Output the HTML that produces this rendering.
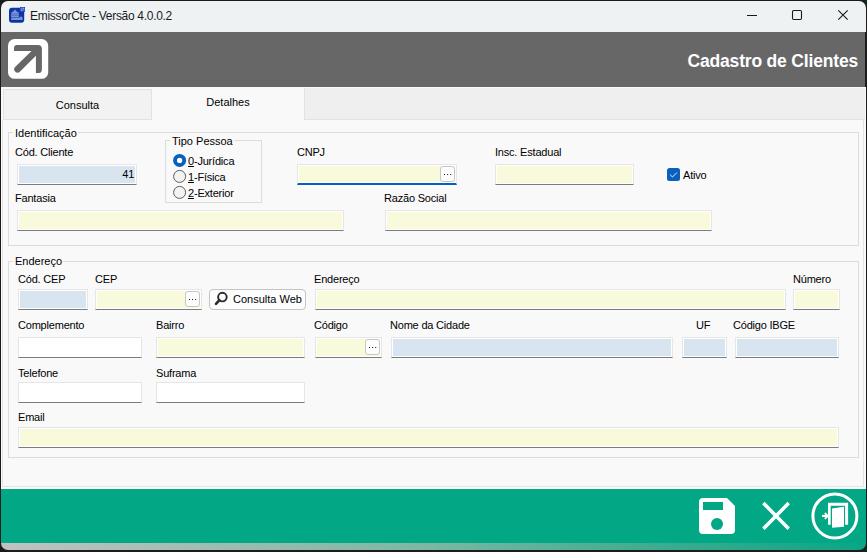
<!DOCTYPE html>
<html><head><meta charset="utf-8">
<style>
*{box-sizing:border-box;margin:0;padding:0}
html,body{width:867px;height:552px;overflow:hidden;background:linear-gradient(to right,#1a1a1a 0%,#1a1a1a 60%,#0d2a20 100%);font-family:"Liberation Sans",sans-serif;}
.win{position:absolute;left:0;top:0;width:867px;height:552px;background:#1c1c1c;border-radius:8px 8px 8px 8px;overflow:hidden}
.a{position:absolute}
.titlebar{left:1px;top:1px;width:865px;height:31px;background:#eff2f3;border-radius:7px 7px 0 0}
.ttl{left:30px;top:9.4px;font-size:12px;letter-spacing:-0.3px;color:#1a1a1a;white-space:nowrap}
.hdr{left:1px;top:32px;width:864px;height:55px;background:#676767}
.hdrtxt{right:9px;top:51px;font-size:17.5px;letter-spacing:-0.18px;font-weight:bold;color:#fff;white-space:nowrap}
.body{left:1px;top:87px;width:865px;height:402px;background:#f9f9f9}
.tabstrip{left:304px;top:88px;width:561px;height:32px;background:#efefef;border-left:1px solid #e2e2e2;border-bottom:1px solid #e2e2e2}
.tab{top:88px;height:32px;font-size:11px;color:#000;text-align:center;line-height:32px}
.page{left:2px;top:120px;width:862px;height:367px;border:1px solid #e4e4e4;border-top:none}
.grp{border:1px solid #dcdcdc}
.gl{font-size:11px;color:#000;background:#f9f9f9;padding:0 1px 0 2px;white-space:nowrap;letter-spacing:0px}
.lbl{font-size:11px;color:#000;white-space:nowrap;letter-spacing:-0.2px}
.in{height:21px;border:1px solid #e6e6e6;border-bottom:1px solid #7c7c7c;box-shadow:inset 1px 1px 0 #fff,inset -1px -1px 0 #fff}
.y{background:#f9fadc}
.b{background:#d8e5f1}
.w{background:#fff}
.footer{left:1px;top:489px;width:865px;height:54px;background:#02a886}
.fline{left:1px;top:488px;width:865px;height:1px;background:#fbfbfb}
.bot{left:1px;top:543px;width:865px;height:7px;background:linear-gradient(to right,#c0c2c1 0%,#9dbdb2 25%,#7ab7a4 50%,#3fac90 75%,#0aa686 100%);border-radius:0 0 7px 7px}
.ell{width:15px;height:16px;border:1px solid #c6c6c6;border-radius:3px;background:#fdfdfd}
.ell::after{content:"";position:absolute;left:2.8px;top:6.8px;width:1.6px;height:1.6px;background:#111;box-shadow:3.1px 0 0 #111,6.2px 0 0 #111}
</style></head><body>
<div class="win">
  <div class="a titlebar"></div>
  <svg class="a" style="left:6px;top:4px" width="22" height="22" viewBox="0 0 22 22">
    <rect x="3" y="3.8" width="15.2" height="15" rx="3" fill="#0a36a8"/>
    <rect x="14" y="3" width="5" height="4.8" fill="#0a36a8"/>
    <rect x="14.6" y="3.6" width="3.8" height="3.6" fill="#8ea0dc"/>
    <rect x="15.4" y="4.4" width="1.2" height="1.2" fill="#0a36a8"/><rect x="16.6" y="5.6" width="1.2" height="1.2" fill="#0a36a8"/>
    <path d="M5.2 13.4 V8.8 L7.2 7.4 L9 5.6 L10.8 7.4 L12.8 8.8 V13.4 Z" fill="#8092d4"/>
    <path d="M5.4 9.8 H12.6 M5.4 11.4 H12.6" stroke="#3d5bbd" stroke-width="0.6"/>
    <path d="M5.2 15 H16.5" stroke="#9fb0e4" stroke-width="1.3"/>
    <path d="M13.5 13.6 Q15 12.4 16.4 13.6" stroke="#9fb0e4" stroke-width="1" fill="none"/>
  </svg>
  <div class="a ttl">EmissorCte - Versão 4.0.0.2</div>
  <svg class="a" style="left:746px;top:9px" width="110" height="14" viewBox="0 0 110 14">
    <path d="M1 6.5 H11" stroke="#1a1a1a" stroke-width="1"/>
    <rect x="46.5" y="1.5" width="9" height="9" fill="none" stroke="#1a1a1a" stroke-width="1.1" rx="1.2"/>
    <path d="M92.3 1.3 L101.7 10.7 M101.7 1.3 L92.3 10.7" stroke="#1a1a1a" stroke-width="1.15"/>
  </svg>
  <div class="a hdr"></div>
  <svg class="a" style="left:6px;top:37px" width="44" height="44" viewBox="0 0 44 44">
    <rect x="2" y="2" width="40.2" height="39.8" rx="6.5" fill="#fff"/>
    <path d="M8 14 V11 Q8 8 11 8 H32 Q35.9 8 35.9 12 V32 Q35.9 35.9 32.9 35.9 H29.9 V18.7 L13.6 35 A3.4 3.4 0 0 1 8.6 30.6 L25.5 14 Z" fill="#676767"/>
  </svg>
  <div class="a hdrtxt">Cadastro de Clientes</div>
  <div class="a body"></div>
  <div class="a tabstrip"></div>
  <div class="a tab" style="left:3px;top:89px;width:149px;height:31px;background:#f2f2f2;border:1px solid #e2e2e2;line-height:29px;padding-top:1px">Consulta</div>
  <div class="a tab" style="left:152px;width:152px;top:87px;height:34px;line-height:31px">Detalhes</div>
  <div class="a page"></div>

  <!-- Identificacao -->
  <div class="a grp" style="left:8px;top:132px;width:851px;height:114px"></div>
  <div class="a gl" style="left:13px;top:127px">Identificação</div>
  <div class="a lbl" style="left:15px;top:146px">Cód. Cliente</div>
  <div class="a in b" style="left:17px;top:164px;width:120px;font-size:11px;text-align:right;padding-right:1.5px;line-height:19px">41</div>
  <div class="a grp" style="left:165px;top:140px;width:97px;height:63px"></div>
  <div class="a gl" style="left:170px;top:135px">Tipo Pessoa</div>
  <svg class="a" style="left:172px;top:153px" width="16" height="46" viewBox="0 0 16 46">
    <circle cx="7.6" cy="7.4" r="6.5" fill="#0a5fbf"/><circle cx="7.6" cy="7.4" r="2.6" fill="#fff"/>
    <circle cx="7.6" cy="23.4" r="6" fill="#f3f3f3" stroke="#5c5c5c" stroke-width="1"/>
    <circle cx="7.6" cy="39.4" r="6" fill="#f3f3f3" stroke="#5c5c5c" stroke-width="1"/>
  </svg>
  <div class="a lbl" style="left:188px;top:155px"><u>0</u>-Jurídica</div>
  <div class="a lbl" style="left:188px;top:171px"><u>1</u>-Física</div>
  <div class="a lbl" style="left:188px;top:187px"><u>2</u>-Exterior</div>
  <div class="a lbl" style="left:297px;top:146px">CNPJ</div>
  <div class="a in y" style="left:297px;top:164px;width:160px;border-bottom:2px solid #0061c0"></div>
  <div class="a ell" style="left:440px;top:166px"></div>
  <div class="a lbl" style="left:495px;top:146px">Insc. Estadual</div>
  <div class="a in y" style="left:495px;top:164px;width:139px"></div>
  <svg class="a" style="left:667px;top:168px" width="13" height="13" viewBox="0 0 13 13">
    <rect x="0" y="0" width="13" height="13" rx="2.5" fill="#0a5fbf"/>
    <path d="M3.2 6.8 L5.5 9 L9.8 4.6" fill="none" stroke="#e8f0fa" stroke-width="1"/>
  </svg>
  <div class="a lbl" style="left:683px;top:169px">Ativo</div>
  <div class="a lbl" style="left:15px;top:192px">Fantasia</div>
  <div class="a in y" style="left:17px;top:210px;width:327px"></div>
  <div class="a lbl" style="left:384px;top:192px">Razão Social</div>
  <div class="a in y" style="left:385px;top:210px;width:327px"></div>

  <!-- Endereco -->
  <div class="a grp" style="left:8px;top:261px;width:851px;height:197px"></div>
  <div class="a gl" style="left:13px;top:255px">Endereço</div>
  <div class="a lbl" style="left:18px;top:273px">Cód. CEP</div>
  <div class="a in b" style="left:18px;top:289px;width:70px"></div>
  <div class="a lbl" style="left:95px;top:273px">CEP</div>
  <div class="a in y" style="left:95px;top:289px;width:107px"></div>
  <div class="a ell" style="left:185px;top:291px"></div>
  <div class="a" style="left:209px;top:289px;width:97px;height:21px;border:1px solid #c4c4c4;border-radius:4px;background:#fdfdfd;font-size:11px;line-height:19px;padding-left:23px">Consulta Web</div>
  <svg class="a" style="left:213px;top:291px" width="16" height="16" viewBox="0 0 16 16">
    <circle cx="9.4" cy="6.1" r="4.3" fill="none" stroke="#2a2a2a" stroke-width="1.9"/>
    <path d="M6.4 9.2 L3 12.8" stroke="#2a2a2a" stroke-width="2.6" stroke-linecap="round"/>
  </svg>
  <div class="a lbl" style="left:314px;top:273px">Endereço</div>
  <div class="a in y" style="left:315px;top:289px;width:471px"></div>
  <div class="a lbl" style="left:793px;top:273px">Número</div>
  <div class="a in y" style="left:793px;top:289px;width:47px"></div>

  <div class="a lbl" style="left:18px;top:319px">Complemento</div>
  <div class="a in w" style="left:18px;top:337px;width:124px"></div>
  <div class="a lbl" style="left:156px;top:319px">Bairro</div>
  <div class="a in y" style="left:156px;top:337px;width:149px"></div>
  <div class="a lbl" style="left:314px;top:319px">Código</div>
  <div class="a in y" style="left:315px;top:337px;width:67px"></div>
  <div class="a ell" style="left:365px;top:339px"></div>
  <div class="a lbl" style="left:390px;top:319px">Nome da Cidade</div>
  <div class="a in b" style="left:391px;top:337px;width:282px"></div>
  <div class="a lbl" style="left:696px;top:319px">UF</div>
  <div class="a in b" style="left:682px;top:337px;width:45px"></div>
  <div class="a lbl" style="left:733px;top:319px">Código IBGE</div>
  <div class="a in b" style="left:735px;top:337px;width:104px"></div>

  <div class="a lbl" style="left:18px;top:367px">Telefone</div>
  <div class="a in w" style="left:18px;top:382px;width:124px"></div>
  <div class="a lbl" style="left:156px;top:367px">Suframa</div>
  <div class="a in w" style="left:156px;top:382px;width:149px"></div>
  <div class="a lbl" style="left:18px;top:411px">Email</div>
  <div class="a in y" style="left:18px;top:427px;width:821px"></div>

  <div class="a fline"></div>
  <div class="a footer"></div>
  <svg class="a" style="left:699px;top:498px" width="36" height="36" viewBox="0 0 36 36">
    <path d="M4 0 H28 L36 8 V32 Q36 36 32 36 H4 Q0 36 0 32 V4 Q0 0 4 0 Z" fill="#fff"/>
    <rect x="4" y="4" width="20" height="8" fill="#02a886"/>
    <circle cx="18" cy="26" r="6" fill="#02a886"/>
  </svg>
  <svg class="a" style="left:760px;top:500px" width="32" height="32" viewBox="0 0 32 32">
    <path d="M3.4 3.1 L28.7 28.7 M28.7 3.1 L3.4 28.7" stroke="#fff" stroke-width="3.5"/>
  </svg>
  <svg class="a" style="left:808px;top:489px" width="54" height="54" viewBox="0 0 54 54">
    <circle cx="26.9" cy="26.9" r="22" fill="none" stroke="#fff" stroke-width="3"/>
    <path d="M20 13.7 H40.1 V35.7 H37.1 V16.7 H22.7 V35.7 H20 Z" fill="#fff"/>
    <path d="M24 19.6 L36 17.8 V37.7 L24 38.7 Z" fill="#fff"/>
    <path d="M14 26.9 H19.6" stroke="#fff" stroke-width="2"/>
    <path d="M16.8 24 L19.8 26.9 L16.8 29.8" fill="none" stroke="#fff" stroke-width="1.8"/>
  </svg>
  <div class="a bot"></div>
</div>
</body></html>
